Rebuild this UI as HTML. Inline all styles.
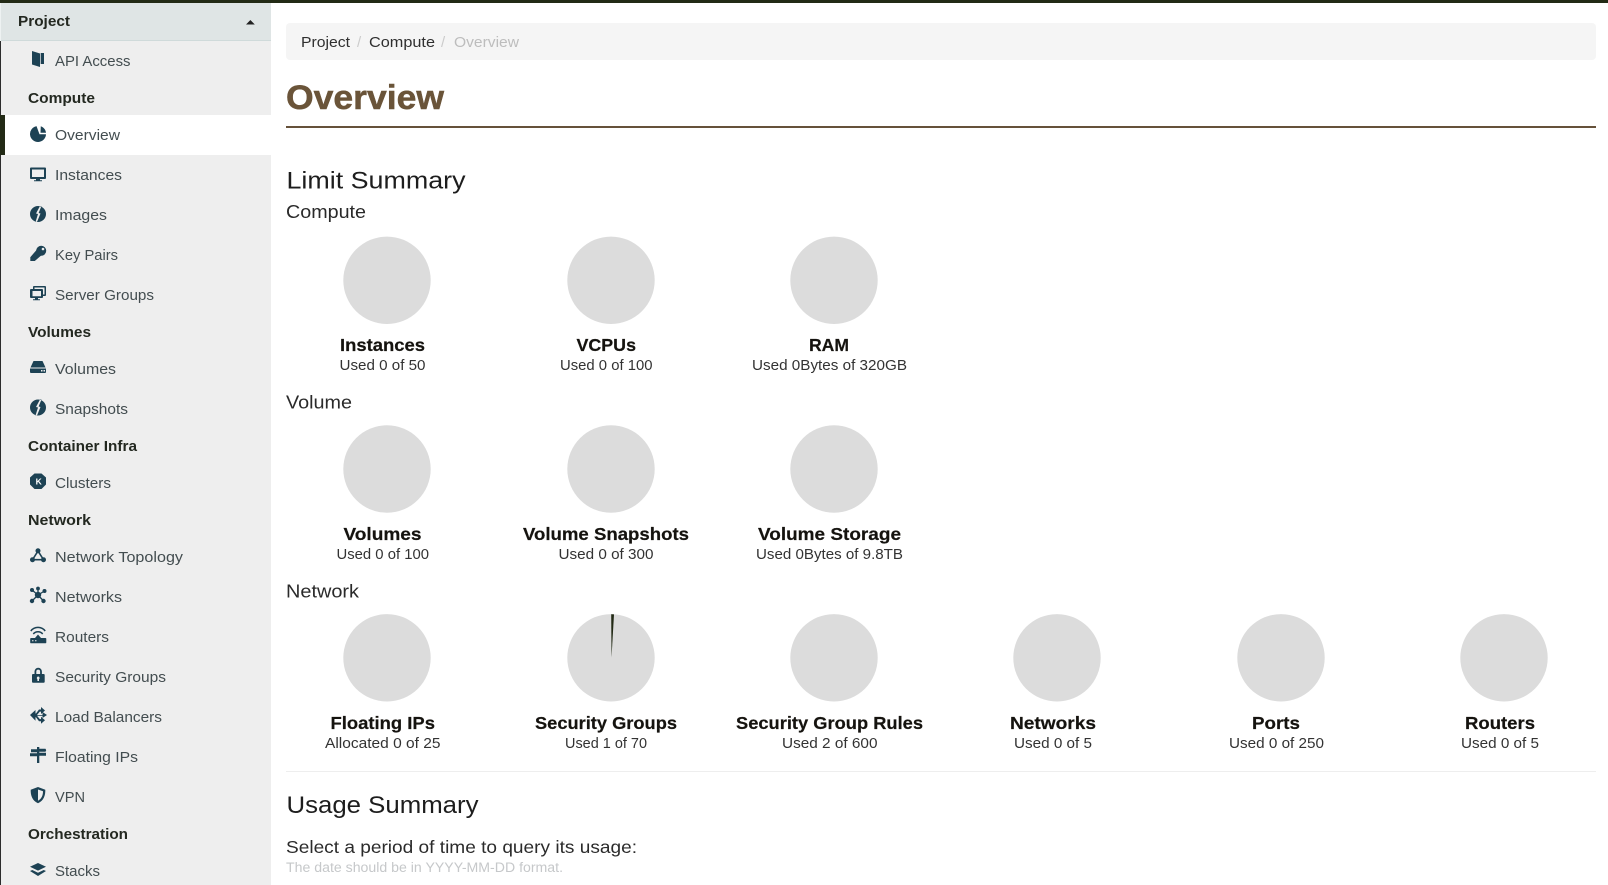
<!DOCTYPE html>
<html lang="en"><head><meta charset="utf-8"><title>Overview</title>
<style>
html,body{margin:0;padding:0;background:#fff;width:1608px;height:885px;overflow:hidden}
svg{display:block}
text{font-family:"Liberation Sans",sans-serif}
.n{font-size:14.5px;fill:#434d50}
.s{font-size:14.5px;font-weight:700;fill:#232820}
.t{font-size:17.5px;font-weight:700;fill:#15130f;stroke:#15130f;stroke-width:.2px}
.u{font-size:14.5px;fill:#333}
.h{font-size:18px;fill:#2a2a2a}
.i{fill:#1d4254}
</style></head><body>
<svg width="1608" height="885" viewBox="0 0 1608 885" xmlns="http://www.w3.org/2000/svg">
<rect width="1608" height="885" fill="#fff"/>
<rect x="1" y="3" width="270" height="882" fill="#eee"/>
<rect x="0" y="41" width="1" height="844" fill="#2c2c2c"/>
<rect x="0" y="3" width="1" height="38" fill="#eef2f2"/>
<rect x="1" y="3" width="270" height="37" fill="#dfe5e5"/>
<rect x="1" y="40" width="270" height="1" fill="#cfdada"/>
<rect x="0" y="115" width="271" height="40" fill="#fff"/>
<rect x="0" y="115" width="5" height="40" fill="#222a15"/>
<rect x="0" y="0" width="1608" height="3" fill="#222a15"/>

<text x="18" y="26" class="s" textLength="52" lengthAdjust="spacingAndGlyphs">Project</text>
<path d="M246 24.500h8.800l-4.400-4.500z" fill="#222"/>

<text x="55" y="66" class="n" textLength="75.500" lengthAdjust="spacingAndGlyphs">API Access</text>
<text x="28" y="103" class="s" textLength="67" lengthAdjust="spacingAndGlyphs">Compute</text>
<text x="55" y="140" class="n" textLength="65" lengthAdjust="spacingAndGlyphs">Overview</text>
<text x="55" y="180" class="n" textLength="67" lengthAdjust="spacingAndGlyphs">Instances</text>
<text x="55" y="220" class="n" textLength="52" lengthAdjust="spacingAndGlyphs">Images</text>
<text x="55" y="260" class="n" textLength="63" lengthAdjust="spacingAndGlyphs">Key Pairs</text>
<text x="55" y="300" class="n" textLength="99" lengthAdjust="spacingAndGlyphs">Server Groups</text>
<text x="28" y="337" class="s" textLength="63" lengthAdjust="spacingAndGlyphs">Volumes</text>
<text x="55" y="374" class="n" textLength="61" lengthAdjust="spacingAndGlyphs">Volumes</text>
<text x="55" y="414" class="n" textLength="73" lengthAdjust="spacingAndGlyphs">Snapshots</text>
<text x="28" y="451" class="s" textLength="109" lengthAdjust="spacingAndGlyphs">Container Infra</text>
<text x="55" y="488" class="n" textLength="56" lengthAdjust="spacingAndGlyphs">Clusters</text>
<text x="28" y="525" class="s" textLength="63" lengthAdjust="spacingAndGlyphs">Network</text>
<text x="55" y="562" class="n" textLength="128" lengthAdjust="spacingAndGlyphs">Network Topology</text>
<text x="55" y="602" class="n" textLength="67" lengthAdjust="spacingAndGlyphs">Networks</text>
<text x="55" y="642" class="n" textLength="54" lengthAdjust="spacingAndGlyphs">Routers</text>
<text x="55" y="682" class="n" textLength="111" lengthAdjust="spacingAndGlyphs">Security Groups</text>
<text x="55" y="722" class="n" textLength="107" lengthAdjust="spacingAndGlyphs">Load Balancers</text>
<text x="55" y="762" class="n" textLength="83" lengthAdjust="spacingAndGlyphs">Floating IPs</text>
<text x="55" y="802" class="n" textLength="30" lengthAdjust="spacingAndGlyphs">VPN</text>
<text x="28" y="839" class="s" textLength="100" lengthAdjust="spacingAndGlyphs">Orchestration</text>
<text x="55" y="876" class="n" textLength="45" lengthAdjust="spacingAndGlyphs">Stacks</text>

<!-- icons -->
<g class="i">
<path d="M32 51l8 2.500V67l-8-2.500z"/><path d="M40.700 53H44v11h-3.300z"/>
<path d="M36.500 126.100L39.500 134.300H46A8 8 0 1 1 36.500 126.100Z"/><path d="M40.800 126.300A8 8 0 0 1 46 132.800H40.500Z"/>
<path fill-rule="evenodd" d="M31 167.500h14a1 1 0 0 1 1 1v9.500a1 1 0 0 1-1 1h-5v1.300h2v1h-8v-1h2V179h-5a1 1 0 0 1-1-1v-9.500a1 1 0 0 1 1-1zM32 169.500v7.500h12v-7.500z"/>
<path fill-rule="evenodd" d="M38 206a8 8 0 1 1 0 16 8 8 0 0 1 0-16zM40 206L36 213.500L38 214L35.500 222L37 222L40.500 213.500L38.600 213L41.500 206Z"/>
<circle cx="41.200" cy="250.800" r="5"/><path d="M37.800 248.500l4.500 6L34.800 261H30.300v-3.800z"/><circle cx="43" cy="249" r="1.300" fill="#eee"/>
<path fill-rule="evenodd" d="M34 286h11a1 1 0 0 1 1 1v8a1 1 0 0 1-1 1h-2v-1.500h1.500V287.500h-10V289H33v-2a1 1 0 0 1 1-1z"/>
<path fill-rule="evenodd" d="M31 289h11a1 1 0 0 1 1 1v7a1 1 0 0 1-1 1h-4v1.300h2v1h-7v-1h2V298h-4a1 1 0 0 1-1-1v-7a1 1 0 0 1 1-1zM32.500 291v5.300h8.500V291z"/>
<path fill-rule="evenodd" d="M33.500 361h9l3 6.500h-15zM30 368.500h16v3.500a1 1 0 0 1-1 1H31a1 1 0 0 1-1-1zM41 370v1.500h1.500V370zM43.500 370v1.500H45V370z"/>
<path fill-rule="evenodd" d="M38 399.500a8 8 0 1 1 0 16 8 8 0 0 1 0-16zM40 399.500L36 407L38 407.500L35.500 415.500L37 415.500L40.500 407L38.600 406.500L41.500 399.500Z"/>
<path fill-rule="evenodd" d="M34.500 473.500h7l4.500 4v7l-4.500 4.500h-7l-4.500-4.500v-7z"/>
<path d="M38 548.300a2.500 2.500 0 1 1-.01 0zM32.500 557.200a2.500 2.500 0 1 1-.01 0zM43.500 557.200a2.500 2.500 0 1 1-.01 0z"/>
<path d="M38 551l-5.500 8.700h11z" fill="none" stroke="#1d4254" stroke-width="1.600"/>
<circle cx="38" cy="595" r="3.200"/><circle cx="38" cy="588.500" r="1.900"/><circle cx="32" cy="590" r="2"/><circle cx="44.500" cy="591" r="2"/><circle cx="32" cy="601" r="2.200"/><circle cx="43.500" cy="601" r="2.200"/>
<path d="M38 588.500V595M32 590l6 5 6.500-4M32 601l6-6 5.500 6" fill="none" stroke="#1d4254" stroke-width="1.300"/>
<path fill-rule="evenodd" d="M31 638h4l3-3.500 3 3.500h4.500a.8.800 0 0 1 .8.800v3.700a.8.800 0 0 1-.8.800H31a.8.800 0 0 1-.8-.8v-3.700a.8.800 0 0 1 .8-.8zM32 640.300v1h1.500v-1zM35 640.300v1h1.500v-1z"/>
<path d="M30.800 631A9 9 0 0 1 45.200 631M33.300 634A6 6 0 0 1 42.700 634" fill="none" stroke="#1d4254" stroke-width="1.500"/>
<path fill-rule="evenodd" d="M34.500 674v-2.500a3.700 3.700 0 0 1 7.400 0V674h1.800a1 1 0 0 1 1 1v6.700a1 1 0 0 1-1 1H33a1 1 0 0 1-1-1V675a1 1 0 0 1 1-1zM36.300 674h3.800v-2.500a1.900 1.900 0 0 0-3.800 0zM38.200 676.500a1.500 1.500 0 0 0-.8 2.700v1.800h1.600v-1.800a1.500 1.500 0 0 0-.8-2.700z"/>
<path d="M30 715l5.500-5v3.500H36l3-4h2v-2.500l4 3.500-4 3.500v-2.400h-1.200l-2.800 3.400h5.500V712l4.500 3-4.500 3v-2.300H37l2.800 3.400H41v-2.400l4 3.500-4 3.500v-2.500h-2l-3-4h-.5v3.500z"/>
<path d="M37 747h2.300v1.800h6.200l.7 1.500-.7 1.500h-6.200v1h6.700v3H39.300V763H37v-6.700H30v-3h7v-1H31v-3h6z"/>
<path d="M38 787l7.300 2.800c.2 5.500-1.600 11-7.300 13.500-5.700-2.500-7.500-8-7.300-13.500zM38 789.500v11.300c3.700-2 5-5.500 5-9.500z" fill-rule="evenodd"/>
<path d="M38 863L46 866.800L38 870.600L30 866.800Z"/><path d="M30 871L32.300 870L38 872.800L43.700 870L46 871L38 876Z"/>
</g>
<text x="35.600" y="484.500" font-size="8.500" font-weight="700" fill="#fff">K</text>

<!-- breadcrumb -->
<rect x="286" y="23" width="1310" height="37" rx="4" fill="#f5f5f5"/>
<text x="301" y="47" font-size="15" fill="#2f2f2f" textLength="49" lengthAdjust="spacingAndGlyphs">Project</text>
<text x="357" y="47" font-size="15" fill="#ccc">/</text>
<text x="369" y="47" font-size="15" fill="#2f2f2f" textLength="66" lengthAdjust="spacingAndGlyphs">Compute</text>
<text x="441" y="47" font-size="15" fill="#ccc">/</text>
<text x="454" y="47" font-size="15" fill="#bdbdbd" textLength="65" lengthAdjust="spacingAndGlyphs">Overview</text>

<!-- title -->
<text x="286" y="109" font-size="34" font-weight="700" fill="#6a5439" stroke="#6a5439" stroke-width=".5" textLength="158" lengthAdjust="spacingAndGlyphs">Overview</text>
<rect x="286" y="126" width="1310" height="2" fill="#65513a"/>

<text x="286.500" y="188.500" font-size="24" fill="#1d1d1d" textLength="179" lengthAdjust="spacingAndGlyphs">Limit Summary</text>
<text x="286" y="218" class="h" textLength="80" lengthAdjust="spacingAndGlyphs">Compute</text>
<text x="286" y="408.500" class="h" textLength="66" lengthAdjust="spacingAndGlyphs">Volume</text>
<text x="286" y="597.500" class="h" textLength="73" lengthAdjust="spacingAndGlyphs">Network</text>

<!-- pies -->
<g fill="#dcdcdc">
<circle cx="387" cy="280.300" r="43.700"/><circle cx="611" cy="280.300" r="43.700"/><circle cx="834" cy="280.300" r="43.700"/>
<circle cx="387" cy="469" r="43.700"/><circle cx="611" cy="469" r="43.700"/><circle cx="834" cy="469" r="43.700"/>
<circle cx="387" cy="657.800" r="43.700"/><circle cx="611" cy="657.800" r="43.700"/><circle cx="834" cy="657.800" r="43.700"/><circle cx="1057" cy="657.800" r="43.700"/><circle cx="1281" cy="657.800" r="43.700"/><circle cx="1504" cy="657.800" r="43.700"/>
</g>
<path d="M611.500 657.800L611.200 614.300Q612.600 614.200 614 614.400z" fill="#222a15"/>

<!-- row 1 -->
<text x="340" y="351" class="t" textLength="85" lengthAdjust="spacingAndGlyphs">Instances</text>
<text x="339.500" y="370" class="u" textLength="86" lengthAdjust="spacingAndGlyphs">Used 0 of 50</text>
<text x="576.500" y="351" class="t" textLength="59.500" lengthAdjust="spacingAndGlyphs">VCPUs</text>
<text x="560" y="370" class="u" textLength="92.500" lengthAdjust="spacingAndGlyphs">Used 0 of 100</text>
<text x="809" y="351" class="t" textLength="40" lengthAdjust="spacingAndGlyphs">RAM</text>
<text x="752" y="370" class="u" textLength="155" lengthAdjust="spacingAndGlyphs">Used 0Bytes of 320GB</text>
<!-- row 2 -->
<text x="343.500" y="540" class="t" textLength="78" lengthAdjust="spacingAndGlyphs">Volumes</text>
<text x="336.500" y="559" class="u" textLength="92.500" lengthAdjust="spacingAndGlyphs">Used 0 of 100</text>
<text x="523" y="540" class="t" textLength="166" lengthAdjust="spacingAndGlyphs">Volume Snapshots</text>
<text x="558.500" y="559" class="u" textLength="95" lengthAdjust="spacingAndGlyphs">Used 0 of 300</text>
<text x="758" y="540" class="t" textLength="143" lengthAdjust="spacingAndGlyphs">Volume Storage</text>
<text x="756" y="559" class="u" textLength="147" lengthAdjust="spacingAndGlyphs">Used 0Bytes of 9.8TB</text>
<!-- row 3 -->
<text x="330.500" y="729" class="t" textLength="104.500" lengthAdjust="spacingAndGlyphs">Floating IPs</text>
<text x="325" y="748" class="u" textLength="115.500" lengthAdjust="spacingAndGlyphs">Allocated 0 of 25</text>
<text x="535" y="729" class="t" textLength="142" lengthAdjust="spacingAndGlyphs">Security Groups</text>
<text x="565" y="748" class="u" textLength="82" lengthAdjust="spacingAndGlyphs">Used 1 of 70</text>
<text x="736" y="729" class="t" textLength="187" lengthAdjust="spacingAndGlyphs">Security Group Rules</text>
<text x="782" y="748" class="u" textLength="95.500" lengthAdjust="spacingAndGlyphs">Used 2 of 600</text>
<text x="1010" y="729" class="t" textLength="86" lengthAdjust="spacingAndGlyphs">Networks</text>
<text x="1014" y="748" class="u" textLength="78" lengthAdjust="spacingAndGlyphs">Used 0 of 5</text>
<text x="1252" y="729" class="t" textLength="48" lengthAdjust="spacingAndGlyphs">Ports</text>
<text x="1229" y="748" class="u" textLength="95" lengthAdjust="spacingAndGlyphs">Used 0 of 250</text>
<text x="1465" y="729" class="t" textLength="70" lengthAdjust="spacingAndGlyphs">Routers</text>
<text x="1461" y="748" class="u" textLength="78" lengthAdjust="spacingAndGlyphs">Used 0 of 5</text>

<rect x="286" y="771" width="1310" height="1" fill="#eee"/>
<text x="286.500" y="813" font-size="24" fill="#1d1d1d" textLength="192" lengthAdjust="spacingAndGlyphs">Usage Summary</text>
<text x="286" y="853" font-size="17.500" fill="#2b2b2b" textLength="351" lengthAdjust="spacingAndGlyphs">Select a period of time to query its usage:</text>
<text x="286" y="872" font-size="13.500" fill="#c6c8ca" textLength="277" lengthAdjust="spacingAndGlyphs">The date should be in YYYY-MM-DD format.</text>
</svg>
</body></html>
